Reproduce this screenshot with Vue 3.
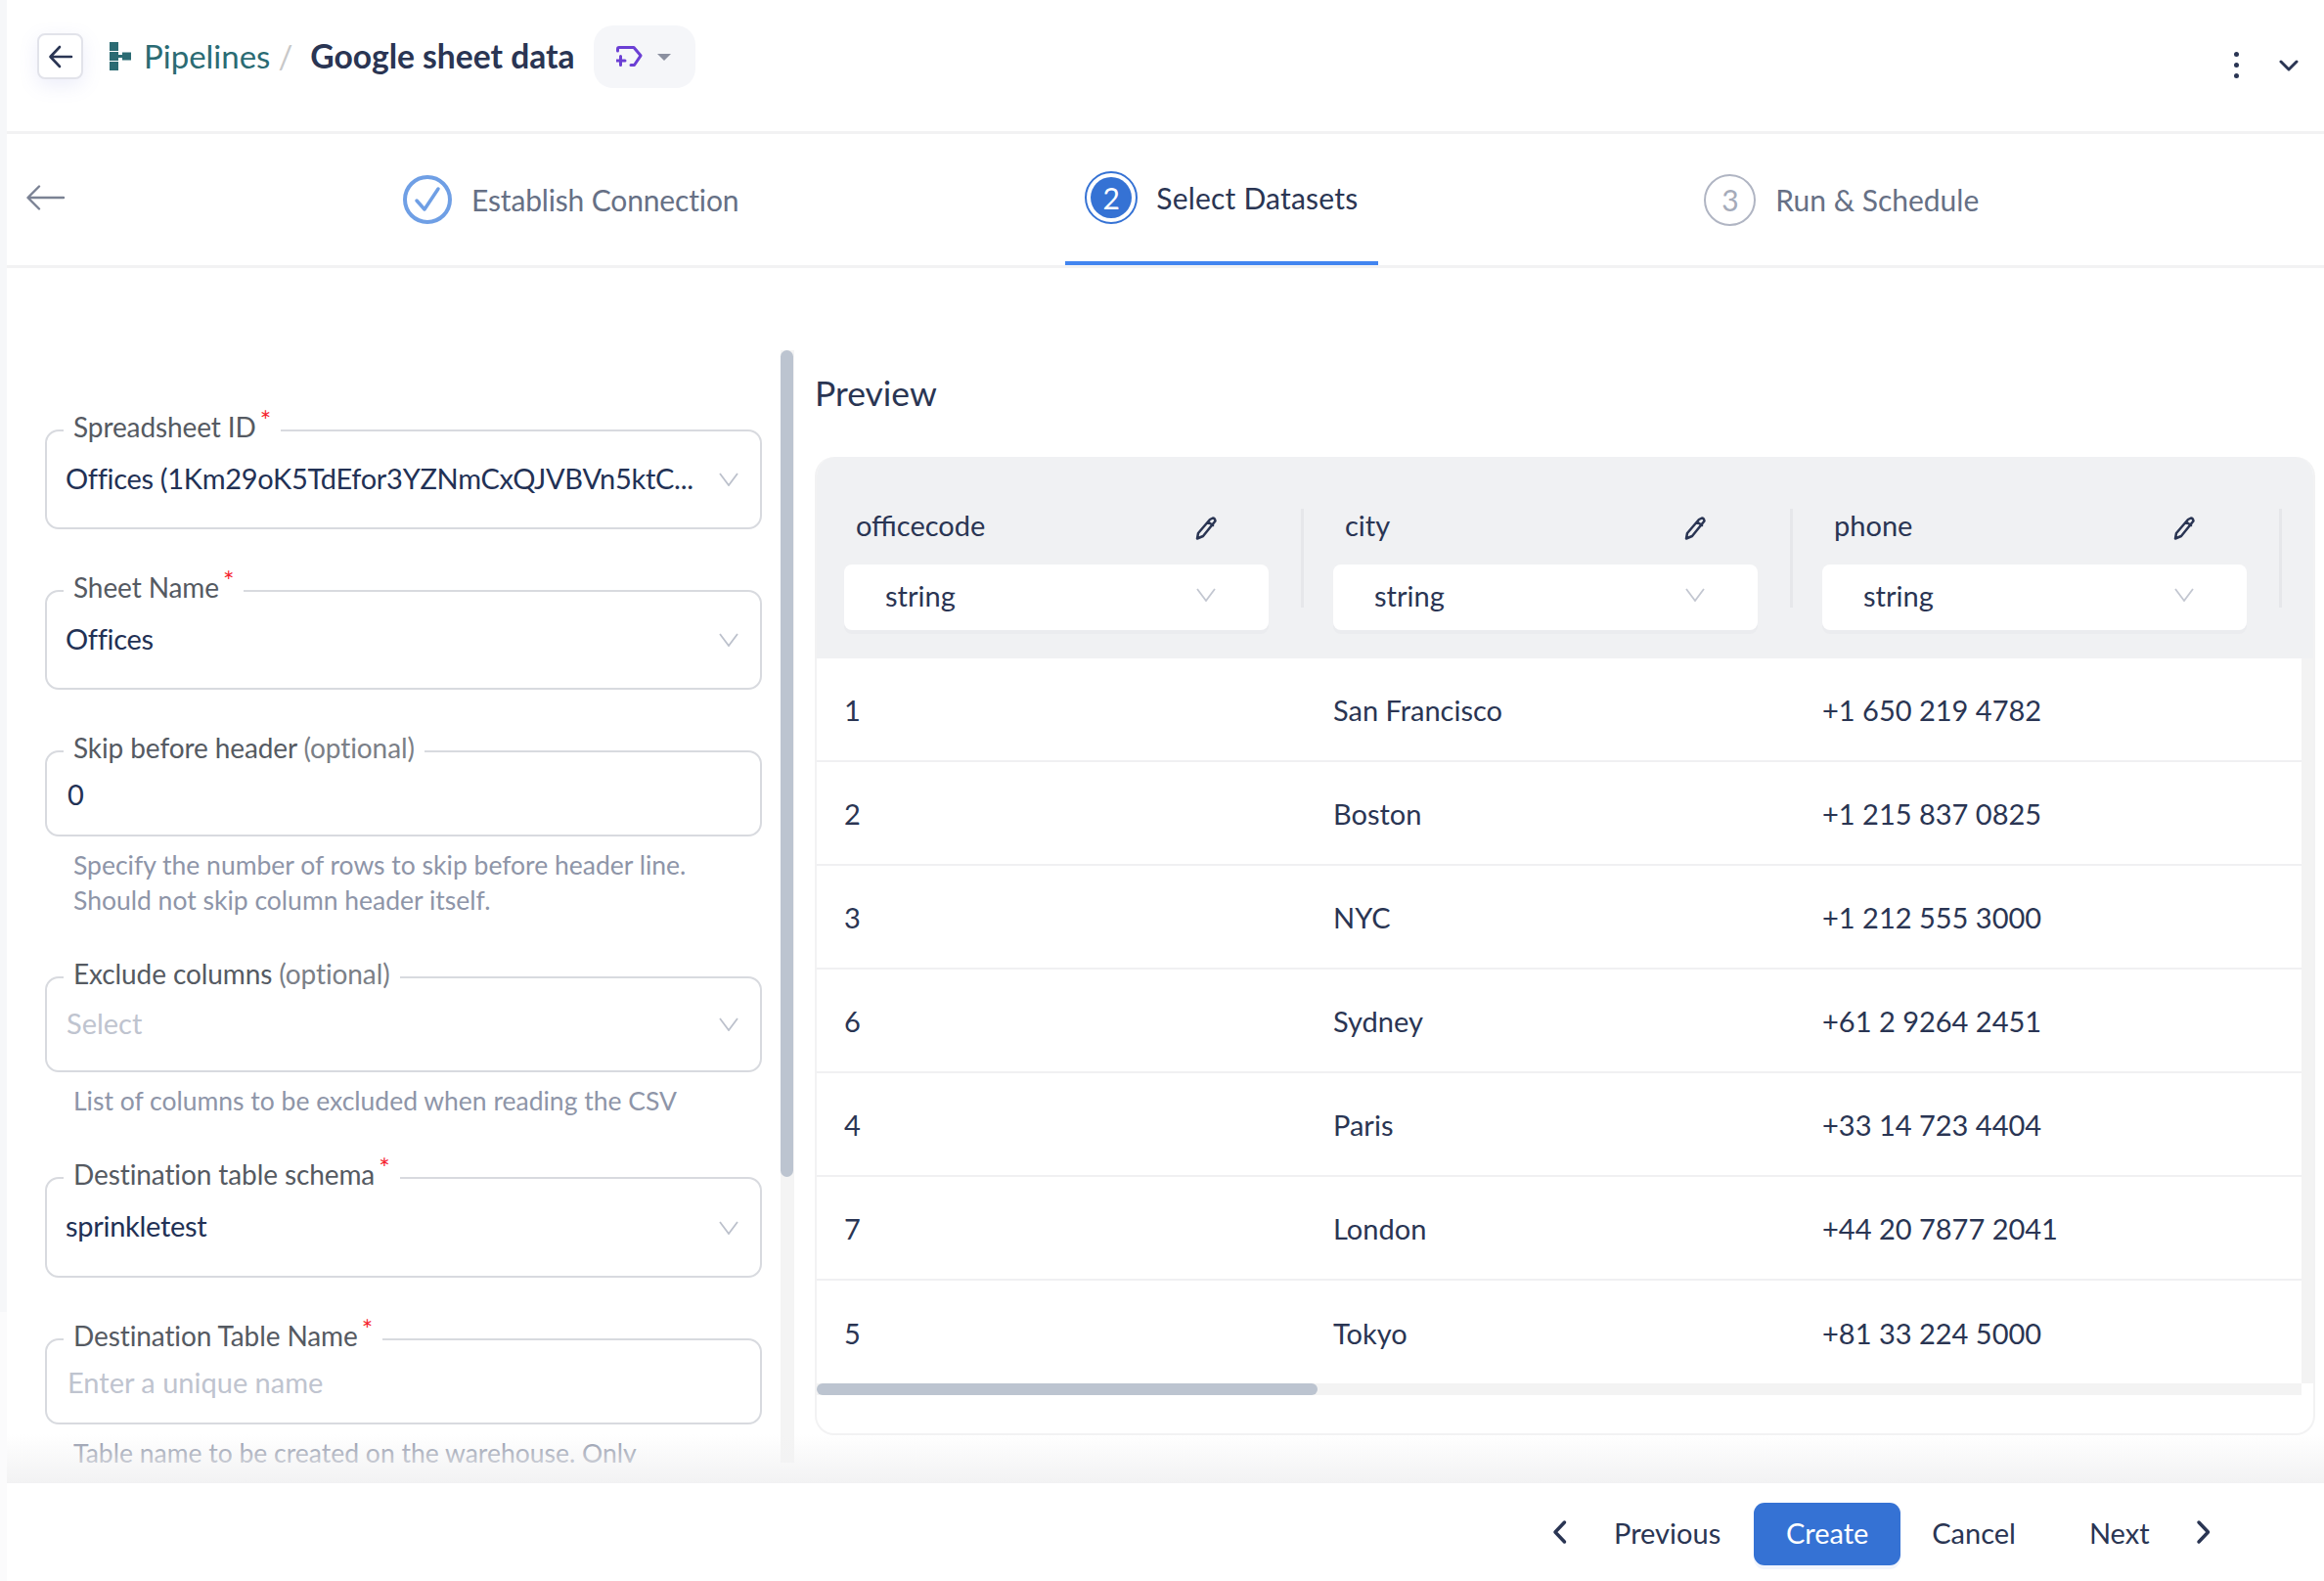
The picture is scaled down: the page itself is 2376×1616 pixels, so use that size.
<script setup>
const fields = [
  { label: 'Spreadsheet ID', required: true, value: 'Offices (1Km29oK5TdEfor3YZNmCxQJVBVn5ktC...', select: true, height: 102 },
  { label: 'Sheet Name', required: true, value: 'Offices', select: true, height: 102 },
  { label: 'Skip before header', optional: true, value: '0', height: 88, help: ['Specify the number of rows to skip before header line.', 'Should not skip column header itself.'] },
  { label: 'Exclude columns', optional: true, placeholder: 'Select', select: true, height: 98, help: ['List of columns to be excluded when reading the CSV'] },
  { label: 'Destination table schema', required: true, value: 'sprinkletest', select: true, height: 103 },
  { label: 'Destination Table Name', required: true, placeholder: 'Enter a unique name', height: 88, help: ['Table name to be created on the warehouse. Only'] },
]

const columns = ['officecode', 'city', 'phone']

const rows = [
  ['1', 'San Francisco', '+1 650 219 4782'],
  ['2', 'Boston', '+1 215 837 0825'],
  ['3', 'NYC', '+1 212 555 3000'],
  ['6', 'Sydney', '+61 2 9264 2451'],
  ['4', 'Paris', '+33 14 723 4404'],
  ['7', 'London', '+44 20 7877 2041'],
  ['5', 'Tokyo', '+81 33 224 5000'],
]
</script>

<template>
  <div class="page">
    <div class="strip"></div>
    <div class="content">
      <header class="topbar">
        <button class="back-btn">
          <svg width="26" height="24" viewBox="0 0 26 24" fill="none" stroke="#2a3553" stroke-width="2.6" stroke-linecap="round" stroke-linejoin="round"><path d="M24 12H3M12 2 2.5 12 12 22" /></svg>
        </button>
        <svg class="pipe-icon" width="22" height="29" viewBox="0 0 22 29" fill="#2b6b73">
          <rect x="0" y="0" width="9" height="9" />
          <rect x="0" y="10" width="9" height="9" />
          <rect x="0" y="20" width="9" height="9" />
          <rect x="9" y="13" width="4" height="3" />
          <rect x="13" y="10.500" width="9" height="8" />
        </svg>
        <span class="crumb">Pipelines</span>
        <span class="slash">/</span>
        <span class="title">Google sheet data</span>
        <div class="pill">
          <svg width="27" height="22" viewBox="0 0 27 22" fill="none" stroke="#6b3fd4" stroke-width="3" stroke-linecap="round" stroke-linejoin="round"><path d="M1.500 5V3Q1.500 1.500 3 1.500H18L25 9.800 18.500 19.500H15M4.500 10.500V19.500M0 15H9" /></svg>
          <span class="caret"></span>
        </div>
        <div class="top-actions">
          <div class="dots"><i></i><i></i><i></i></div>
          <svg width="20" height="12" viewBox="0 0 20 12" fill="none" stroke="#2a3553" stroke-width="3" stroke-linecap="round" stroke-linejoin="round"><path d="M2 2 10 10 18 2" /></svg>
        </div>
      </header>

      <nav class="tabs">
        <svg class="tabs-back" width="40" height="26" viewBox="0 0 40 26" fill="none" stroke="#7b8294" stroke-width="2.4" stroke-linecap="round" stroke-linejoin="round"><path d="M38 13H2M13 1.500 1.500 13 13 24.500" /></svg>
        <div class="tab tab-done">
          <svg width="50" height="50" viewBox="0 0 50 50" fill="none" stroke="#6f9fe5"><circle cx="25" cy="25" r="23" stroke-width="4" /><path d="M14 26 22 35 36 14" stroke-width="3.500" stroke-linecap="round" stroke-linejoin="round" /></svg>
          <span>Establish Connection</span>
        </div>
        <div class="tab tab-active">
          <span class="num-active"><b>2</b></span>
          <span>Select Datasets</span>
        </div>
        <div class="tab tab-next">
          <span class="num-next">3</span>
          <span>Run &amp; Schedule</span>
        </div>
      </nav>

      <main class="main">
        <section class="form-wrap">
          <div class="form">
            <div v-for="f in fields" :key="f.label" class="field">
              <div class="box" :class="{ 'is-select': f.select }" :style="{ height: f.height + 'px' }">
                <label class="label">{{ f.label }}<em v-if="f.optional"> (optional)</em><sup v-if="f.required">*</sup></label>
                <span v-if="f.value" class="value">{{ f.value }}</span>
                <span v-else class="placeholder">{{ f.placeholder }}</span>
                <svg v-if="f.select" class="chev" width="20" height="14" viewBox="0 0 20 14" fill="none" stroke="#bcc1cc" stroke-width="1.800"><path d="M1 1 10 13 19 1" /></svg>
              </div>
              <p v-if="f.help" class="help">
                <span v-for="line in f.help" :key="line">{{ line }}</span>
              </p>
            </div>
          </div>
          <div class="form-track"><div class="form-thumb"></div></div>
        </section>

        <section class="preview">
          <h2>Preview</h2>
          <div class="panel">
            <div class="thead">
              <div v-for="col in columns" :key="col" class="th">
                <div class="th-main">
                  <div class="th-label">
                    <span>{{ col }}</span>
                    <svg width="22" height="24" viewBox="0 0 22 24" fill="none" stroke="#2a3553" stroke-width="2.500" stroke-linecap="round" stroke-linejoin="round"><path d="M15 3 18 1.500Q20 1.500 20.500 4.500L8 20 2 22.500 3 17ZM13 5.500 18 9" /></svg>
                  </div>
                  <div class="type-select">
                    <span>string</span>
                    <svg width="20" height="14" viewBox="0 0 20 14" fill="none" stroke="#c3c7d1" stroke-width="1.800"><path d="M1 1 10 13 19 1" /></svg>
                  </div>
                </div>
                <div class="sep"></div>
              </div>
            </div>
            <div class="tbody">
              <div class="rows">
                <div v-for="row in rows" :key="row[0]" class="tr">
                  <div v-for="cell in row" :key="cell" class="td">{{ cell }}</div>
                </div>
              </div>
              <div class="v-track"></div>
            </div>
            <div class="h-track"><div class="h-thumb"></div></div>
          </div>
        </section>
      </main>

      <footer class="footer">
        <button class="link">
          <svg width="16" height="26" viewBox="0 0 16 26" fill="none" stroke="#2a3553" stroke-width="3.500" stroke-linecap="round" stroke-linejoin="round"><path d="M12.500 3 3 13 12.500 23" /></svg>
          <span class="prev">Previous</span>
        </button>
        <button class="create">Create</button>
        <button class="link cancel">Cancel</button>
        <button class="link next">
          <span>Next</span>
          <svg width="16" height="26" viewBox="0 0 16 26" fill="none" stroke="#2a3553" stroke-width="3.500" stroke-linecap="round" stroke-linejoin="round"><path d="M3 3 12.500 13 3 23" /></svg>
        </button>
      </footer>
    </div>
  </div>
</template>

<style>
html, body {
  margin: 0;
  background: #fff;
}
</style>

<style scoped>
.page {
  width: 2376px;
  height: 1616px;
  display: flex;
  overflow: hidden;
  font-family: Lato, "Noto Sans", sans-serif;
  color: #2a3553;
  background: #fff;
}
.strip {
  width: 7px;
  flex: none;
  background: linear-gradient(#f6f7f9 0, #f6f7f9 83%, #fbfbfc 83%);
}
.content {
  width: 2369px;
  display: flex;
  flex-direction: column;
}
.topbar {
  height: 137px;
  box-sizing: border-box;
  border-bottom: 3px solid #f2f2f3;
  display: flex;
  align-items: flex-start;
  padding: 26px 0 0 31px;
  flex: none;
}
.back-btn {
  width: 47px;
  height: 47px;
  margin-top: 8px;
  padding: 0;
  box-sizing: border-box;
  display: flex;
  align-items: center;
  justify-content: center;
  background: #fff;
  border: 2px solid #e2e3ea;
  border-radius: 8px;
  box-shadow: 0 6px 20px rgba(120, 130, 220, 0.14);
}
.pipe-icon {
  margin: 17px 0 0 27px;
}
.crumb {
  margin-left: 13px;
  font-size: 33px;
  line-height: 62px;
  color: #2b6b73;
}
.slash {
  margin-left: 8px;
  font-size: 33px;
  line-height: 62px;
  color: #c8c8c8;
}
.title {
  margin-left: 18px;
  font-size: 33.6px;
  font-weight: 700;
  line-height: 62px;
}
.pill {
  width: 104px;
  height: 64px;
  margin-left: 19px;
  box-sizing: border-box;
  padding-left: 23px;
  display: flex;
  align-items: center;
  gap: 15px;
  background: #f5f6f9;
  border-radius: 20px;
}
.caret {
  width: 0;
  height: 0;
  border-left: 7px solid transparent;
  border-right: 7px solid transparent;
  border-top: 7px solid #8b90a0;
}
.top-actions {
  margin-left: auto;
  margin-right: 26px;
  margin-top: 27px;
  display: flex;
  align-items: center;
  gap: 41px;
}
.dots {
  display: flex;
  flex-direction: column;
  gap: 6px;
}
.dots i {
  display: block;
  width: 5px;
  height: 5px;
  border-radius: 50%;
  background: #2a3553;
}
.tabs {
  height: 137px;
  box-sizing: border-box;
  border-bottom: 3px solid #f2f2f3;
  display: flex;
  align-items: center;
  padding-left: 20px;
  flex: none;
  font-size: 30px;
  color: #667085;
}
.tabs-back {
  margin-top: -4px;
}
.tab {
  display: flex;
  align-items: center;
}
.tab-done {
  margin-left: 345px;
  gap: 20px;
  letter-spacing: -0.15px;
}
.tab-active {
  margin-left: 334px;
  height: 100%;
  box-sizing: border-box;
  padding: 0 21px 0 20px;
  gap: 19px;
  border-bottom: 4px solid #4285f0;
  color: #2a3553;
  letter-spacing: 0.2px;
}
.num-active {
  width: 54px;
  height: 54px;
  box-sizing: border-box;
  display: flex;
  align-items: center;
  justify-content: center;
  border: 2px solid #3572d4;
  border-radius: 50%;
}
.num-active b {
  width: 42px;
  height: 42px;
  display: block;
  text-align: center;
  line-height: 42px;
  border-radius: 50%;
  font-weight: 400;
  color: #fff;
  background: #3572d4;
}
.tab-next {
  margin-left: 333px;
  gap: 20px;
}
.num-next {
  width: 53px;
  height: 53px;
  box-sizing: border-box;
  display: flex;
  align-items: center;
  justify-content: center;
  border: 2px solid #b0b5c3;
  border-radius: 50%;
  color: #a5abba;
}
.main {
  height: 1242px;
  flex: none;
  display: flex;
  align-items: flex-start;
}
.form-wrap {
  height: 1221px;
  flex: none;
  display: flex;
}
.form {
  width: 733px;
  height: 1221px;
  box-sizing: border-box;
  margin: 0 19px 0 39px;
  padding-top: 165px;
  overflow: hidden;
  flex: none;
}
.field {
  margin-bottom: 62px;
}
.box {
  position: relative;
  box-sizing: border-box;
  display: flex;
  align-items: center;
  padding-left: 21px;
  border: 2px solid #d8dadf;
  border-radius: 14px;
  font-size: 29px;
}
.box.is-select {
  padding: 0 0 4px 19px;
}
.label {
  position: absolute;
  left: 17px;
  top: -23px;
  padding: 0 10px;
  background: #fff;
  font-size: 28px;
  line-height: 36px;
  letter-spacing: -0.1px;
  color: #555a62;
}
.label em {
  font-style: normal;
  color: #7b7f87;
}
.label sup {
  position: relative;
  top: 3px;
  margin-left: 4px;
  font-size: 27px;
  line-height: 0;
  color: #f5222d;
}
.value {
  color: #223155;
  letter-spacing: -0.3px;
}
.placeholder {
  color: #bfc4cf;
}
.is-select .placeholder {
  margin-left: 1px;
}
.chev {
  position: absolute;
  right: 22px;
  top: 50%;
  margin-top: -7px;
}
.help {
  margin: 11px 0 -2px;
  padding-left: 29px;
  font-size: 26.5px;
  line-height: 36px;
  color: #8e95a8;
}
.help span {
  display: block;
}
.form-track {
  width: 14px;
  height: 1137px;
  margin-top: 84px;
  flex: none;
  background: #f4f4f4;
}
.form-thumb {
  width: 13px;
  height: 845px;
  background: #bcc4d0;
  border-radius: 7px;
}
.preview {
  padding: 108px 0 0 21px;
  flex: none;
}
.preview h2 {
  margin: 0 0 45px;
  font-size: 35.5px;
  line-height: 40px;
  font-weight: 400;
}
.panel {
  width: 1534px;
  height: 1000px;
  box-sizing: border-box;
  border: 2px solid #f2f2f3;
  border-top: 0;
  border-radius: 20px;
  overflow: hidden;
}
.thead {
  height: 206px;
  display: flex;
  background: #f0f1f3;
}
.th {
  width: 500px;
  box-sizing: border-box;
  padding: 53px 0 0 28px;
  display: flex;
  align-items: flex-start;
  flex: none;
}
.th-main {
  width: 434px;
  flex: none;
}
.th-label {
  height: 57px;
  display: flex;
  justify-content: space-between;
  align-items: flex-start;
  box-sizing: border-box;
  padding: 0 53px 0 12px;
  font-size: 29px;
  line-height: 34px;
}
.th-label svg {
  margin-top: 8px;
}
.sep {
  width: 3px;
  height: 101px;
  margin-left: 33px;
  background: #e6e7ea;
  flex: none;
}
.type-select {
  height: 67px;
  box-sizing: border-box;
  padding: 0 54px 5px 42px;
  display: flex;
  align-items: center;
  justify-content: space-between;
  background: #fff;
  border-radius: 8px;
  box-shadow: 0 4px 0 #ebecef;
  font-size: 29px;
}
.tbody {
  height: 741px;
  display: flex;
}
.rows {
  width: 1518px;
  flex: none;
}
.tr {
  height: 106px;
  box-sizing: border-box;
  display: flex;
  align-items: center;
  border-bottom: 2px solid #f0f0f2;
}
.tr:last-child {
  border-bottom: 0;
}
.td {
  width: 500px;
  box-sizing: border-box;
  padding-left: 28px;
  font-size: 29px;
  flex: none;
}
.v-track {
  width: 12px;
  background: #f3f3f3;
}
.h-track {
  width: 1518px;
  height: 12px;
  background: #f3f3f3;
}
.h-thumb {
  width: 512px;
  height: 12px;
  background: #bcc4d0;
  border-radius: 6px;
}
.footer {
  position: relative;
  height: 100px;
  flex: none;
  background: #fff;
  display: flex;
  align-items: center;
  padding-left: 1580px;
  font-size: 29px;
}
.footer::before {
  content: "";
  position: absolute;
  left: 0;
  right: 0;
  top: -50px;
  height: 50px;
  background: linear-gradient(rgba(242, 242, 243, 0), #f2f2f3);
}
.link {
  display: flex;
  align-items: center;
  padding: 0;
  border: 0;
  background: none;
  font: inherit;
  color: #2a3553;
}
.prev {
  margin-left: 47px;
}
.create {
  width: 150px;
  height: 64px;
  margin: 4px 0 0 34px;
  padding: 0 0 3px;
  border: 0;
  border-radius: 11px;
  background: #3572d4;
  box-shadow: 0 4px 0 #f1f5fd;
  font: inherit;
  color: #fff;
}
.cancel {
  margin-left: 32px;
}
.next {
  margin-left: 75px;
  gap: 47px;
}
</style>
